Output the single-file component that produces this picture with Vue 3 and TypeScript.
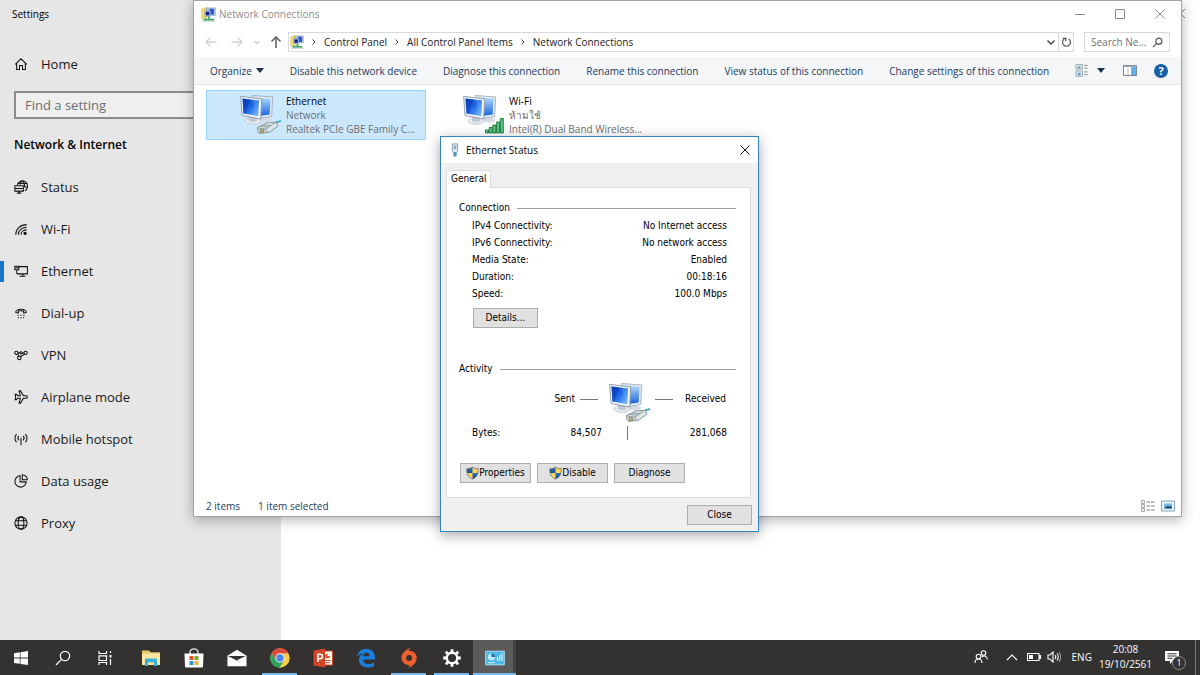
<script setup lang="ts">
import { ref } from 'vue'

interface NavItem { label: string; icon: string }
interface Connection { name: string; network: string; device: string; icon: string }
interface TaskItem { label: string; icon: string; state?: 'open' | 'active' }

const navItems: NavItem[] = [
  { label: 'Status', icon: 'status' },
  { label: 'Wi-Fi', icon: 'wifi' },
  { label: 'Ethernet', icon: 'ethernet' },
  { label: 'Dial-up', icon: 'dialup' },
  { label: 'VPN', icon: 'vpn' },
  { label: 'Airplane mode', icon: 'airplane' },
  { label: 'Mobile hotspot', icon: 'hotspot' },
  { label: 'Data usage', icon: 'data' },
  { label: 'Proxy', icon: 'proxy' },
]
const currentNav = ref('Ethernet')

const crumbs: string[] = ['Control Panel', 'All Control Panel Items', 'Network Connections']

const commands: string[] = [
  'Disable this network device',
  'Diagnose this connection',
  'Rename this connection',
  'View status of this connection',
  'Change settings of this connection',
]

const connections: Connection[] = [
  { name: 'Ethernet', network: 'Network', device: 'Realtek PCIe GBE Family C...', icon: 'lan' },
  { name: 'Wi-Fi', network: 'ห้ามใช้', device: 'Intel(R) Dual Band Wireless...', icon: 'wlan' },
]
const selected = ref('Ethernet')

const details: [string, string][] = [
  ['IPv4 Connectivity:', 'No Internet access'],
  ['IPv6 Connectivity:', 'No network access'],
  ['Media State:', 'Enabled'],
  ['Duration:', '00:18:16'],
  ['Speed:', '100.0 Mbps'],
]

const shellItems: TaskItem[] = [
  { label: 'Start', icon: 'start' },
  { label: 'Search', icon: 'find' },
  { label: 'Task view', icon: 'taskview' },
]
const apps: TaskItem[] = [
  { label: 'File Explorer', icon: 'explorer' },
  { label: 'Store', icon: 'store' },
  { label: 'Mail', icon: 'mail' },
  { label: 'Chrome', icon: 'chrome', state: 'open' },
  { label: 'PowerPoint', icon: 'powerpoint' },
  { label: 'Edge', icon: 'edge' },
  { label: 'Origin', icon: 'origin', state: 'open' },
  { label: 'Settings', icon: 'gear', state: 'open' },
  { label: 'Control Panel', icon: 'panel', state: 'active' },
]
</script>

<template>
  <svg class="sprite" aria-hidden="true">
    <defs>
      <linearGradient id="screen" x1="0" y1="0" x2="1" y2="1">
        <stop offset="0" stop-color="#0a3fc4" /><stop offset=".5" stop-color="#1f6ae8" /><stop offset="1" stop-color="#8cc8fb" />
      </linearGradient>
      <linearGradient id="screen-back" x1="0" y1="0" x2="0" y2="1">
        <stop offset="0" stop-color="#b4dafb" /><stop offset="1" stop-color="#1b62dd" />
      </linearGradient>
      <linearGradient id="shield-l" x1="0" y1="0" x2="0" y2="1">
        <stop offset="0" stop-color="#2f6fc0" /><stop offset="1" stop-color="#1c4f94" />
      </linearGradient>
    </defs>

    <symbol id="home" viewBox="0 0 16 16"><path d="M1.500 8.300 8 2l6.500 6.300M3 7v7.300h3.300V9.600h3.400v4.700H13V7" /></symbol>
    <symbol id="status" viewBox="0 0 16 16">
      <path d="M3.700 5.500A6 6 0 1 1 12.500 12.200M9.500.800C7.800 2 7.200 3.600 7 5.500M9.500.800c2 1.800 3 4 2.800 7.200M4.300 4h10.300M11.500 8h3.900" />
      <path d="M1 6.500h9.700v6.200H1zM5.800 12.700V15M3.300 15h5M1 9.600h9.700" />
    </symbol>
    <symbol id="wifi" viewBox="0 0 16 16">
      <path d="M2 14.500C2 8 7 3 14.500 3M5 14.500C5 9.500 9 6 14.500 6M8 14.500C8 11 11 9 14.500 9" />
      <circle cx="12.700" cy="12.900" r="1.300" fill="currentColor" />
    </symbol>
    <symbol id="ethernet" viewBox="0 0 16 16">
      <path d="M6 3h9.300v8.300H3.500M10 11.300V14M6.500 14h6.500M1 2.500h4.500v4H1zM3.200 6.500v4.800M1.800 4.300h3" />
    </symbol>
    <symbol id="dialup" viewBox="0 0 16 16">
      <path d="M2 7.500C1 2.500 15 2.500 14 7.500l-3 .3V5.800c-2-.6-4-.6-6 0v2z" />
      <path d="M4 10.500h1.400M7.300 10.500h1.400M10.600 10.500H12M4.500 13.500h1.200M7.300 13.500h1.400M10.300 13.500h1.200" />
    </symbol>
    <symbol id="vpn" viewBox="0 0 16 16">
      <circle cx="2.700" cy="5.500" r="1.900" /><circle cx="8" cy="5.500" r="1.300" /><circle cx="13.300" cy="5.500" r="1.900" />
      <circle cx="6" cy="11.300" r="2" /><path d="M4.300 6.500 5.500 9M12 7 7.500 10M9 6.500l2.500-1.500M4.600 5.500h2" />
    </symbol>
    <symbol id="airplane" viewBox="0 0 16 16">
      <path d="M5.800 1h1.700l3.300 5.500h3.100c1.800 0 1.800 3 0 3h-3.100L7.500 15H5.800l1.500-5.500H4.200L2.800 11H1.300l.6-3-.6-3h1.500l1.400 1.500h3.100z" />
    </symbol>
    <symbol id="hotspot" viewBox="0 0 16 16">
      <path d="M8 6.500V15M5.500 4.500c-1.300 1.500-1.300 3.500 0 5M10.500 4.500c1.300 1.500 1.300 3.500 0 5M3 2.500c-2.500 2.500-2.500 6.500 0 9M13 2.500c2.500 2.500 2.500 6.500 0 9" />
    </symbol>
    <symbol id="data" viewBox="0 0 16 16">
      <path d="M7 2A6.500 6.500 0 1 0 14 9H7zM9.500.8v5.700h5.700A5.700 5.700 0 0 0 9.500.8z" />
    </symbol>
    <symbol id="proxy" viewBox="0 0 16 16">
      <circle cx="8" cy="8" r="7" /><ellipse cx="8" cy="8" rx="3.300" ry="7" /><path d="M1.500 5.500h13M1.500 10.500h13" />
    </symbol>

    <symbol id="net" viewBox="0 0 16 16">
      <path d="M1 2.500 6 .5v11l-5 1.200z" fill="#f3df70" stroke="#c3ab3a" stroke-width=".6" />
      <path d="M6 1h9.300v8H6z" fill="#b9cbe4" stroke="#7d93b5" stroke-width=".6" />
      <path d="M9 2h4.800v6H9z" fill="#2a56d0" />
      <path d="M4 4h6v6H4z" fill="#d5e1f2" stroke="#7488ab" stroke-width=".6" /><path d="M5 5h4v4H5z" fill="#10218c" />
      <path d="M7.500 10h2v2.500h-2z" fill="#39a06b" /><path d="M3 12.500h11v2H3z" fill="#36a568" /><path d="M1 15h14" stroke="#a9c8b5" />
    </symbol>

    <symbol id="pcs" viewBox="0 0 42 42">
      <ellipse cx="26" cy="26" rx="6" ry="2.500" fill="#d5dce3" />
      <path d="M12.500 1.500 32.700 3l-1 19.500-11 1.800z" fill="#e3ebf2" stroke="#95a5b5" stroke-width=".8" />
      <path d="M15 3.500 30.600 4.800l-.9 15.700-8.700 1.300z" fill="url(#screen-back)" />
      <ellipse cx="13" cy="27" rx="8" ry="3.300" fill="#e7ebef" stroke="#b6bfc9" stroke-width=".7" />
      <path d="M9 22h7l1 5c-2 1.300-6 1-8 0z" fill="#bcc7d2" />
      <path d="M.7 2.300 21.700 5l-1 20L2 21.500z" fill="#f2f6fa" stroke="#8796a6" stroke-width=".9" />
      <path d="M2.500 4.400 19 6.600l-.8 15.600L3.500 19.500z" fill="url(#screen)" />
      <path d="M2.500 4.400 10.500 5.500 5 19.800l-1.500-.3z" fill="#0736ad" opacity=".5" />
      <path d="M12.500 5.700 19 6.600l-.8 15.600-2-.4z" fill="#66a9f5" opacity=".4" />
    </symbol>
    <symbol id="lan" viewBox="0 0 42 42">
      <use href="#pcs" />
      <path d="M34 30c2-2 4-2.600 7-3" fill="none" stroke="#3fb5c5" stroke-width="2.200" />
      <path d="m17.500 33.500 9-4.500 10-.8 1.300 4-8.300 6-10 1.300-2-3z" fill="#dde4e6" stroke="#7f8d92" stroke-width=".9" />
      <path d="m17.500 34 8.500 1 9-6.500M26 35l1 3.500M20 32.300l8 .9M23 31l8 .7" fill="none" stroke="#85959a" stroke-width=".9" />
      <path d="m20 35.500 4 .4v2.300l-4 .2z" fill="#b5ae79" stroke="#746f52" stroke-width=".6" />
    </symbol>
    <symbol id="wlan" viewBox="0 0 42 42">
      <use href="#pcs" />
      <g fill="#5cc483" stroke="#17763c" stroke-width=".9">
        <path d="M22.500 36h3v3h-3zM26.200 33.500h3V39h-3zM29.900 31h3v8h-3zM33.600 28h3v11h-3zM37.300 24.500h3V39h-3z" />
      </g>
    </symbol>
    <symbol id="plug" viewBox="0 0 12 16">
      <path d="M3 1h6v8.500L7.500 11h-3L3 9.500z" fill="#dfe9f1" stroke="#7994ac" />
      <path d="M4.700 3h2.600v4H4.700z" fill="#8ba9c1" /><path d="M4.500 11h3v4h-3z" fill="#3da3cf" stroke="#5684a3" stroke-width=".6" />
    </symbol>
    <symbol id="shield" viewBox="0 0 16 16">
      <path d="M8 .8C10 2.200 12.500 2.800 15 2.800 15 9 13.500 13 8 15.500 2.500 13 1 9 1 2.800 3.500 2.800 6 2.200 8 .8z" fill="#fbd558" />
      <path d="M8 .8V8H1.300A18 18 0 0 1 1 2.800C3.500 2.800 6 2.200 8 .8z" fill="url(#shield-l)" />
      <path d="M8 8h6.700c-.8 3.600-2.700 6-6.700 7.500z" fill="url(#shield-l)" />
      <path d="M8 .8C10 2.200 12.500 2.800 15 2.800 15 9 13.500 13 8 15.500 2.500 13 1 9 1 2.800 3.500 2.800 6 2.200 8 .8z" fill="none" stroke="#5b6470" stroke-width=".9" />
    </symbol>

    <symbol id="start" viewBox="0 0 16 16"><path d="m1 3.200 5.800-.9v5.300H1zM7.500 2.200 15 1v6.600H7.500zM1 8.400h5.800v5.300L1 12.900zM7.500 8.400H15V15l-7.500-1.100z" fill="#fff" /></symbol>
    <symbol id="find" viewBox="0 0 16 16"><path d="M6.800 9.200 1 15" /><circle cx="10" cy="6" r="4.700" /></symbol>
    <symbol id="taskview" viewBox="0 0 16 16">
      <path d="M2 1v2.500h7.500V1M2 5.800h7.500v4.700H2zM2 15v-2.500h7.500V15M13.500 1v2M13.500 9v6" /><path d="M12.500 5h2v2.500h-2z" fill="currentColor" stroke="none" />
    </symbol>
    <symbol id="explorer" viewBox="0 0 20 20">
      <path d="M1 2.500h7l1.500 1.800H19V17H1z" fill="#e9c968" /><path d="M1 5.500h18V17H1z" fill="#fbe7a0" />
      <path d="M4 18v-6.500c0-.6.400-1 1-1h10c.6 0 1 .4 1 1V18h-3v-3.500H7V18z" fill="#38b4d8" /><path d="M7 14.500h6V17H7z" fill="#f8e399" />
    </symbol>
    <symbol id="store" viewBox="0 0 20 20">
      <path d="M6 6V4a4 3.200 0 0 1 8 0v2" fill="none" stroke="#e8e8e8" stroke-width="1.300" /><path d="M.5 5.500h19L19 18.500q0 1-1 1H2q-1 0-1-1z" fill="#fff" />
      <path d="M5.500 8h4v4h-4z" fill="#d8562a" /><path d="M10.500 8h4v4h-4z" fill="#7ba82b" /><path d="M5.500 13h4v4h-4z" fill="#2a95d8" /><path d="M10.500 13h4v4h-4z" fill="#f0b429" />
    </symbol>
    <symbol id="mail" viewBox="0 0 22 20">
      <path d="M.5 7.500 11 1l10.500 6.500V19H.5z" fill="#fff" /><path d="M1.500 7.700h19L11 12.500l4 2.500-13.500-7z" fill="#333" />
    </symbol>
    <symbol id="chrome" viewBox="0 0 20 20">
      <circle cx="10" cy="10" r="9.700" fill="#f8cf44" /><path d="M1.600 5.150A9.700 9.700 0 0 1 18.400 5.150L10 5.500 5.900 12.300z" fill="#dc4b3e" />
      <path d="M1.600 5.150A9.700 9.700 0 0 0 9.500 19.700L14 12.500 10 14 6 12.200z" fill="#2da562" />
      <circle cx="10" cy="10" r="4.700" fill="#f4f4f4" /><circle cx="10" cy="10" r="3.700" fill="#4a86e8" />
    </symbol>
    <symbol id="powerpoint" viewBox="0 0 20 20">
      <path d="M10 3h9.500v14H10z" fill="#fff" stroke="#d14a2c" /><circle cx="14.500" cy="8" r="2.500" fill="#d8572f" /><path d="M14.500 8V5A3 3 0 0 1 17.500 8z" fill="#fff" /><path d="M12 12.500h5.500M12 14.700h5.500" stroke="#d14a2c" />
      <path d="M.5 2.500 12 .5v19L.5 17.500z" fill="#d04526" /><path d="M5 14V6.200h2.200a2.200 2.200 0 0 1 0 4.500H5" fill="none" stroke="#fff" stroke-width="1.600" />
    </symbol>
    <symbol id="edge" viewBox="0 0 20 20">
      <path d="M1 9C2 3.500 5.600.8 10.200.8c5.500 0 8.800 4 8.800 8.500v2.200H7c.2 3.200 2.600 4.500 5.500 4.500 2 0 4-.6 5.500-1.500v3.700c-1.700.9-4 1.300-6.300 1.300C6.500 19.500 3 16.500 3 12c0-3.200 1.700-5.500 4.500-7C4.800 5.300 2.500 6.600 1 9zm6-.8h6.500c0-2.200-1-3.500-3-3.500S7.300 6.200 7 8.200z" fill="#1b7fdb" fill-rule="evenodd" />
    </symbol>
    <symbol id="origin" viewBox="0 0 20 20">
      <path d="M11 0 9.700 2.800c4.600-.2 8 2.900 8 6.900 0 5-4 8.300-8.200 10.300l1.300-2.800c-4.600.2-8.300-2.900-8.300-7.100C2.500 5.300 6.500 2 11 0z" fill="#ee6030" />
      <circle cx="10.100" cy="10" r="3" fill="#333" />
    </symbol>
    <symbol id="gear" viewBox="0 0 20 20">
      <circle cx="10" cy="10" r="5.300" fill="none" stroke="#fff" stroke-width="2.400" />
      <path d="M10 4V1.200M10 16v2.800M4 10H1.200M16 10h2.800M5.800 5.800l-2-2M14.200 14.200l2 2M5.800 14.200l-2 2M14.200 5.800l2-2" fill="none" stroke="#fff" stroke-width="2.800" />
    </symbol>
    <symbol id="panel" viewBox="0 0 20 16">
      <path d="M.7 1.200h18.600v13.600H.7z" fill="#4eb6e6" stroke="#a8e1f8" /><circle cx="6.500" cy="7" r="3.600" fill="#bdeafd" /><path d="M6.500 7V3.400A3.600 3.600 0 0 1 10 7z" fill="#1c6ba8" />
      <path d="M12.500 11V7M14.700 11V5M17 11V3.500" stroke="#e2f7ff" stroke-width="1.200" /><path d="M3 12.700h7" stroke="#dff5ff" />
    </symbol>
  </svg>

  <div class="desktop">
    <main class="workspace">
      <section class="settings" aria-label="Settings">
        <aside class="sidebar">
          <h1 class="app-title">Settings</h1>
          <button class="nav-item home" type="button"><svg class="line-icon"><use href="#home" /></svg>Home</button>
          <input class="find" type="text" aria-label="Find a setting" placeholder="Find a setting">
          <h2 class="section-title">Network &amp; Internet</h2>
          <nav>
            <button
              v-for="item in navItems" :key="item.label" type="button" class="nav-item"
              :class="{ current: item.label === currentNav }" @click="currentNav = item.label"
            ><svg class="line-icon"><use :href="`#${item.icon}`" /></svg>{{ item.label }}</button>
          </nav>
        </aside>
        <button class="settings-close" type="button" aria-label="Close Settings"><svg viewBox="0 0 10 10"><path d="m0 0 10 10M10 0 0 10" /></svg></button>
      </section>

      <section class="window" aria-label="Network Connections">
        <header class="titlebar">
          <svg class="net-icon"><use href="#net" /></svg>
          <span class="window-title">Network Connections</span>
          <button class="caption" type="button" aria-label="Minimize"><svg viewBox="0 0 10 10"><path d="M0 5.500h10" /></svg></button>
          <button class="caption" type="button" aria-label="Maximize"><svg viewBox="0 0 10 10"><path d="M.5.500h9v9h-9z" /></svg></button>
          <button class="caption" type="button" aria-label="Close"><svg viewBox="0 0 10 10"><path d="m.5.500 9 9M9.500.500l-9 9" /></svg></button>
        </header>

        <div class="address-row">
          <button class="history" type="button" aria-label="Back"><svg viewBox="0 0 12 12"><path d="M11.500 6H1M5.500 1.500 1 6l4.500 4.500" /></svg></button>
          <button class="history" type="button" aria-label="Forward"><svg viewBox="0 0 12 12"><path d="M.5 6H11M6.500 1.500 11 6l-4.500 4.500" /></svg></button>
          <button class="history recent" type="button" aria-label="Recent locations"><svg viewBox="0 0 12 12"><path d="m3.500 5 2.500 2.500L8.500 5" /></svg></button>
          <button class="history up" type="button" aria-label="Up"><svg viewBox="0 0 12 12"><path d="M6 12V1M1.500 5.500 6 1l4.500 4.500" /></svg></button>
          <nav class="address" aria-label="Location">
            <svg class="net-icon"><use href="#net" /></svg>
            <template v-for="crumb in crumbs" :key="crumb">
              <svg class="sep" viewBox="0 0 6 6"><path d="m1.500.500 2.500 2.500-2.500 2.500" /></svg>
              <a class="crumb" href="#">{{ crumb }}</a>
            </template>
            <button class="drop" type="button" aria-label="Previous locations"><svg viewBox="0 0 10 10"><path d="m1.500 3.500 3.500 3.500 3.500-3.500" /></svg></button>
            <button class="refresh" type="button" aria-label="Refresh"><svg viewBox="0 0 12 12"><path d="M8.500 2.300A4.300 4.300 0 1 1 3.500 2.300M2 1.500h3.300v3.200" /></svg></button>
          </nav>
          <label class="search">
            <input type="text" aria-label="Search Network Connections" placeholder="Search Ne...">
            <svg viewBox="0 0 12 12"><circle cx="7.500" cy="4.500" r="3.300" /><path d="M5 7 1 11" /></svg>
          </label>
        </div>

        <div class="toolbar">
          <button class="command" type="button">Organize<svg class="caret" viewBox="0 0 8 5"><path d="M0 0h8L4 5z" /></svg></button>
          <button v-for="command in commands" :key="command" class="command" type="button">{{ command }}</button>
          <span class="view-tools">
            <button type="button" aria-label="Change your view">
              <svg class="view-icon" viewBox="0 0 14 14">
                <path d="M.5.500h7v5h-7zM.5 7.500h7v6h-7z" fill="#dceaf3" stroke="#9aa7b0" /><path d="m2 4 2-2 2 2zM2.500 9.500h3v2.500h-3z" fill="#4e9ec0" /><path d="M2 5h3v-1H2z" fill="#9bbf3b" />
                <path d="M9.500 1.500H13M9.500 4.500H13M9.500 8.500H13M9.500 11.500H13" stroke="#7e7e7e" />
              </svg>
            </button>
            <button class="more" type="button" aria-label="More options"><svg class="caret" viewBox="0 0 8 5"><path d="M0 0h8L4 5z" /></svg></button>
            <button class="preview" type="button" aria-label="Show the preview pane">
              <svg class="view-icon" viewBox="0 0 14 12"><path d="M.5 1h13v10H.5z" fill="#fff" stroke="#7d8790" /><path d="M8 2h5v8.500H8z" fill="#5fb2ee" /><path d="M1 2h12M5 3v7.500" stroke="#a8b2ba" /></svg>
            </button>
            <button type="button" class="help" aria-label="Get help">?</button>
          </span>
        </div>

        <div class="files" role="listbox" aria-label="Connections">
          <button
            v-for="item in connections" :key="item.name" type="button" role="option" class="connection"
            :aria-selected="item.name === selected" @click="selected = item.name"
          >
            <svg class="big-icon"><use :href="`#${item.icon}`" /></svg>
            <span class="lines"><span class="name">{{ item.name }}</span><span>{{ item.network }}</span><span>{{ item.device }}</span></span>
          </button>
        </div>

        <footer class="statusbar">
          <span>2 items</span><span>1 item selected</span>
          <span class="layouts">
            <button type="button" aria-label="Details view">
              <svg viewBox="0 0 14 12"><path d="M.5.500h3v3h-3zM.5 4.500h3v3h-3zM.5 8.500h3v3h-3z" fill="#eee" stroke="#999" stroke-width=".8" /><path d="M5.500 2H9M10 2h3.500M5.500 6H9M10 6h3.500M5.500 10H9M10 10h3.500" stroke="#7a7a7a" /></svg>
            </button>
            <button type="button" aria-label="Large icons view">
              <svg viewBox="0 0 14 12"><path d="M.5 1h13v10H.5z" fill="#e7f5fd" stroke="#82a8c2" /><path d="M3 3.500h8v5H3z" fill="#6fbbe6" /><path d="m3 8.500 3-2.500 5 .5v2z" fill="#1f5470" /></svg>
            </button>
          </span>
        </footer>
      </section>

      <section class="dialog" role="dialog" aria-labelledby="dialog-title">
        <header class="dialog-bar">
          <svg class="plug"><use href="#plug" /></svg>
          <h2 id="dialog-title">Ethernet Status</h2>
          <button type="button" aria-label="Close dialog"><svg class="cross" viewBox="0 0 10 10"><path d="m.5.500 9 9M9.500.500l-9 9" /></svg></button>
        </header>
        <div class="dialog-body">
          <div role="tablist" class="tabs"><button type="button" role="tab" aria-selected="true">General</button></div>
          <div class="panel" role="tabpanel">
            <h3 class="group">Connection</h3>
            <dl class="facts">
              <div v-for="[term, value] in details" :key="term"><dt>{{ term }}</dt><dd>{{ value }}</dd></div>
            </dl>
            <button class="push details" type="button">Details...</button>
            <h3 class="group activity">Activity</h3>
            <div class="traffic">
              <span>Sent</span><i class="dash sent-dash"></i><svg class="big-icon"><use href="#lan" /></svg><i class="dash received-dash"></i><span>Received</span>
            </div>
            <div class="bytes"><span>Bytes:</span><span>84,507</span><i class="bar"></i><span>281,068</span></div>
            <div class="actions">
              <button class="push" type="button"><svg class="shield"><use href="#shield" /></svg>Properties</button>
              <button class="push" type="button"><svg class="shield"><use href="#shield" /></svg>Disable</button>
              <button class="push" type="button">Diagnose</button>
            </div>
          </div>
          <button class="push close" type="button">Close</button>
        </div>
      </section>
    </main>

    <footer class="taskbar">
      <div class="shell"><button v-for="item in shellItems" :key="item.label" type="button" class="task" :aria-label="item.label"><svg class="shell-icon"><use :href="`#${item.icon}`" /></svg></button></div>
      <div class="apps">
        <button v-for="item in apps" :key="item.label" type="button" class="task" :class="item.state" :aria-label="item.label"><svg class="app-icon"><use :href="`#${item.icon}`" /></svg></button>
      </div>
      <div class="tray">
        <button type="button" aria-label="People"><svg class="people" viewBox="0 0 14 14"><circle cx="4.500" cy="6.500" r="2.300" /><circle cx="9.500" cy="3" r="2.300" /><path d="M1 13c0-5.300 7-5.300 7 0M8 7c2-2 5.300-1 5.300 2.500" /></svg></button>
        <button type="button" aria-label="Show hidden icons"><svg class="chevron" viewBox="0 0 12 8"><path d="m1 7 5-5 5 5" /></svg></button>
        <button type="button" aria-label="Battery"><svg class="battery" viewBox="0 0 14 8"><path d="M.5.500h11.500v7H.5zM12.500 2.500h1v3h-1z" /><path d="M2 2h4v4H2z" fill="#fff" stroke="none" /></svg></button>
        <button type="button" aria-label="Volume"><svg class="volume" viewBox="0 0 14 12"><path d="M1 4h2l3-3v10L3 8H1zM8 4q1.500 2 0 4M10 2.500q2.500 3.500 0 7" /><path d="M12 1q3.300 5 0 10" opacity=".5" /></svg></button>
        <span class="lang">ENG</span>
        <time class="clock"><span>20:08</span><span>19/10/2561</span></time>
        <button type="button" class="notify" aria-label="1 new notification"><svg viewBox="0 0 15 15"><path d="M1 1h14v10H9l-3 3v-3H1z" fill="#fff" stroke="none" /><path d="M3.500 3.800h9M3.500 6h9M3.500 8.200h5" stroke="#333" /></svg><span class="badge">1</span></button>
        <button type="button" class="peek" aria-label="Show desktop"></button>
      </div>
    </footer>
  </div>
</template>

<style>
body { margin: 0; }
</style>

<style scoped>
* { box-sizing: border-box; }
.sprite { position: absolute; width: 0; height: 0; }
svg { display: block; flex: none; fill: none; }
button, input { font: inherit; color: inherit; border: 0; margin: 0; padding: 0; background: none; border-radius: 0; outline: 0; }
button { display: flex; align-items: center; white-space: nowrap; }
h1, h2, h3, dl, dd { margin: 0; font-weight: 400; font-size: inherit; }

.desktop {
  display: flex; flex-direction: column; min-height: 100vh; overflow: hidden;
  font: 10px/14px "Open Sans", "Noto Sans", sans-serif; color: #1a1a1a; background: #fff;
}
.workspace { position: relative; flex: 1; display: flex; }

.settings { flex: 1; display: flex; }
.sidebar { width: 281px; background: #e6e6e6; font-size: 13px; line-height: 18px; }
.app-title { padding: 7px 12px 0; font-size: 10px; line-height: 14px; color: #000; }
.nav-item { position: relative; width: 100%; height: 42px; padding-left: 14px; gap: 13px; }
.nav-item.home { margin-top: 22px; }
.line-icon { width: 14px; height: 14px; color: #111; stroke: #111; stroke-width: 1.2; }
.find { display: block; width: 253px; height: 28px; margin: 6px 14px 0; padding: 0 9px; border: 2px solid #8b8b8b; background: #efefef; }
.find::placeholder { color: #6e6e6e; opacity: 1; }
.section-title { padding: 17px 14px 12px; font-size: 12px; font-weight: 600; color: #000; }
.current::before { content: ""; position: absolute; left: 0; top: 11px; width: 4px; height: 21px; background: #1577c8; }
.settings-close { align-self: flex-start; margin: 9px 15px 0 auto; }
.settings-close svg { width: 9px; height: 9px; stroke: #777; }

.window {
  position: absolute; inset: 0 18px 123px 193px; display: flex; flex-direction: column;
  background: #fff; border: 1px solid #a3a3a3; box-shadow: 0 3px 12px rgba(0, 0, 0, .3);
}
.titlebar { display: flex; align-items: center; height: 26px; padding: 0 1px 0 7px; color: #8b8b8b; }
.net-icon { width: 15px; height: 15px; }
.window-title { flex: 1; margin-left: 3px; }
.caption { width: 40px; height: 26px; justify-content: center; }
.caption svg { width: 10px; height: 10px; stroke: #8a8a8a; stroke-width: 1; }

.address-row { display: flex; align-items: center; height: 30px; padding: 0 11px 0 10px; color: #222; }
.history { width: 14px; height: 20px; margin-right: 12px; justify-content: center; }
.history svg { width: 12px; height: 12px; stroke: #cfcfcf; stroke-width: 1.3; }
.history.recent { width: 12px; margin: 0 6px 0 -5px; }
.history.up { margin-right: 5px; }
.history.up svg { stroke: #666; stroke-width: 1.6; }
.address { display: flex; flex: 1; align-items: center; height: 20px; padding-left: 1px; border: 1px solid #d9d9d9; }
.address .net-icon { width: 14px; height: 14px; }
.sep { width: 6px; height: 6px; margin: 0 7px; stroke: #444; }
.crumb { color: inherit; text-decoration: none; white-space: nowrap; }
.drop { width: 15px; height: 18px; margin-left: auto; justify-content: center; }
.drop svg { width: 10px; height: 10px; stroke: #444; stroke-width: 1.5; }
.refresh { width: 15px; height: 18px; justify-content: center; border-left: 1px solid #d9d9d9; }
.refresh svg { width: 11px; height: 11px; stroke: #555; stroke-width: 1.3; }
.search { display: flex; align-items: center; width: 86px; height: 20px; margin-left: 10px; padding: 0 6px; border: 1px solid #d9d9d9; }
.search input { flex: 1; width: 0; }
.search input::placeholder { color: #6f6f6f; opacity: 1; }
.search svg { width: 11px; height: 11px; stroke: #555; stroke-width: 1.3; }

.toolbar { display: flex; align-items: center; height: 28px; padding: 0 14px 0 16px; gap: 26px; background: #f4f6f8; border-bottom: 1px solid #e3e6e9; color: #1e395b; }
.command .caret { margin-left: 4px; }
.caret { width: 8px; height: 5px; fill: #1e2f4b; }
.view-tools { display: flex; align-items: center; margin: 0 0 0 auto; padding-right: 4px; }
.view-icon { width: 14px; height: 13px; }
.more { margin-left: 8px; }
.preview { margin: 0 17px 0 18px; }
.help { width: 14px; height: 14px; justify-content: center; border-radius: 50%; background: #1560a8; color: #fff; font-size: 11px; font-weight: 700; }

.files { display: flex; flex: 1; align-items: flex-start; padding: 5px 12px; gap: 3px; }
.connection { width: 220px; height: 50px; padding-left: 33px; border: 1px solid transparent; text-align: left; gap: 4px; }
.connection[aria-selected="true"] { background: #cce8ff; border-color: #99d1ff; }
.big-icon { width: 42px; height: 42px; }
.lines { display: flex; flex-direction: column; color: #6d6d6d; }
.name { color: #000; }
.statusbar { display: flex; align-items: center; height: 21px; padding: 0 6px 0 12px; gap: 18px; color: #1e395b; }
.layouts { display: flex; gap: 6px; margin-left: auto; }
.layouts svg { width: 14px; height: 12px; }

.dialog {
  position: absolute; left: 440px; top: 136px; width: 319px; background: #f0f0f0; border: 1px solid #3584bd;
  box-shadow: 0 3px 12px rgba(0, 0, 0, .35); color: #000; font-family: "DejaVu Sans Condensed", "Open Sans", sans-serif;
}
.dialog-bar { display: flex; align-items: center; height: 26px; padding: 0 8px; background: #fff; font-family: "Open Sans", sans-serif; }
.plug { width: 12px; height: 14px; }
.dialog-bar h2 { flex: 1; margin-left: 5px; }
.cross { width: 10px; height: 10px; stroke: #111; }
.dialog-body { padding: 7px 6px 6px 5px; }
.tabs button { height: 18px; margin-bottom: -1px; padding: 0 4px 2px; position: relative; z-index: 1; background: #fff; border: 1px solid #dcdcdc; border-bottom: 0; }
.panel { margin-right: 1px; padding: 12px 14px 14px 12px; background: #fff; border: 1px solid #dcdcdc; }
.group { display: flex; align-items: center; gap: 7px; line-height: 16px; }
.group::after { content: ""; flex: 1; height: 1px; background: #a0a0a0; }
.facts { padding: 1px 9px 0 13px; }
.facts div { display: flex; justify-content: space-between; line-height: 17px; }
.push { justify-content: center; min-width: 71px; height: 20px; background: #e1e1e1; border: 1px solid #adadad; }
.push.details { min-width: 65px; margin: 6px 0 0 14px; }
.activity { margin-top: 33px; }
.traffic { display: flex; justify-content: flex-end; padding: 5px 10px 0 0; line-height: 34px; }
.dash { width: 18px; height: 1px; margin-top: 17px; background: #777; }
.sent-dash { margin-left: 5px; margin-right: 11px; }
.received-dash { margin-left: 4px; margin-right: 12px; }
.bytes { display: grid; grid-template-columns: 50fr 80fr 50px 75fr; align-items: center; padding: 1px 9px 0 13px; line-height: 16px; text-align: right; }
.bytes span:first-child { text-align: left; }
.bar { justify-self: center; width: 1px; height: 14px; background: #777; }
.actions { display: flex; gap: 6px; margin: 22px 0 0 1px; }
.shield { width: 13px; height: 14px; }
.push.close { min-width: 65px; margin: 7px 0 0 auto; }

.taskbar { display: flex; height: 35px; background: #333231; color: #fff; }
.shell, .apps, .tray { display: flex; }
.apps { margin-left: 3px; }
.task { position: relative; width: 43px; height: 35px; justify-content: center; }
.shell .task { width: 42px; }
.shell-icon { width: 16px; height: 16px; color: #fff; stroke: #fff; stroke-width: 1.2; }
.shell-icon:has(use[href="#start"]) { stroke: none; }
.app-icon { width: 20px; height: 20px; }
.open::after, .active::after { content: ""; position: absolute; left: 4px; right: 4px; bottom: 0; height: 2px; background: #76b9ed; }
.active { padding-left: 3px; background: #5b5b5a; border-right: 3px solid #454444; }
.active::after { left: 0; right: -3px; }
.tray { align-items: center; margin-left: auto; height: 35px; padding-bottom: 1px; }
.tray svg { stroke: #fff; stroke-width: 1.1; }
.people { width: 14px; height: 14px; margin-right: 18px; }
.chevron { width: 12px; height: 8px; margin-right: 9px; }
.battery { width: 14px; height: 8px; margin-right: 6px; }
.volume { width: 14px; height: 12px; margin-right: 11px; }
.lang { margin-right: 7px; }
.clock { display: flex; flex-direction: column; align-items: center; line-height: 15px; }
.notify { position: relative; width: 30px; height: 35px; margin-left: 4px; justify-content: center; }
.notify svg { width: 15px; height: 15px; }
.badge { position: absolute; left: 16px; top: 16px; width: 14px; height: 14px; border: 1px solid #8c8c8c; border-radius: 50%; background: #333231; font-size: 9px; line-height: 12px; text-align: center; }
.peek { width: 5px; height: 35px; margin-left: 9px; border-left: 1px solid #777; }
</style>
